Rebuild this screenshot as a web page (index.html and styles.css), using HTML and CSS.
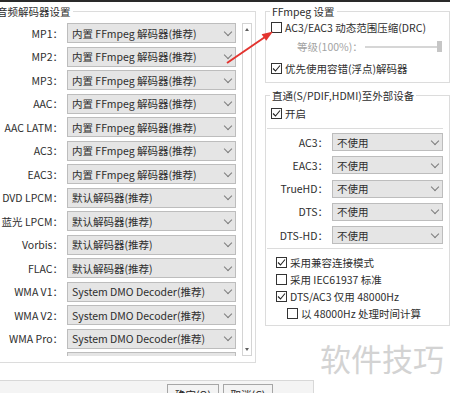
FILE: index.html
```html
<!DOCTYPE html>
<html lang="zh-CN">
  <head>
    <meta charset="UTF-8" />
    <meta name="viewport" content="width=device-width, initial-scale=1.0" />
    <title>音频解码器设置</title>
    <link rel="stylesheet" href="styles.css">
  </head>

  <body>
    <div class="topbar"></div>

    <div class="main">
      <!-- Decoder list -->
      <fieldset class="group group-decoders">
        <legend>音频解码器设置</legend>
        <div class="decoder-area">
          <div class="decoder-list">
            <div class="row"><label>MP1：</label><div class="select">内置 FFmpeg 解码器(推荐)</div></div>
            <div class="row"><label>MP2：</label><div class="select">内置 FFmpeg 解码器(推荐)</div></div>
            <div class="row"><label>MP3：</label><div class="select">内置 FFmpeg 解码器(推荐)</div></div>
            <div class="row"><label>AAC：</label><div class="select">内置 FFmpeg 解码器(推荐)</div></div>
            <div class="row"><label>AAC LATM：</label><div class="select">内置 FFmpeg 解码器(推荐)</div></div>
            <div class="row"><label>AC3：</label><div class="select">内置 FFmpeg 解码器(推荐)</div></div>
            <div class="row"><label>EAC3：</label><div class="select">内置 FFmpeg 解码器(推荐)</div></div>
            <div class="row"><label>DVD LPCM：</label><div class="select">默认解码器(推荐)</div></div>
            <div class="row"><label>蓝光 LPCM：</label><div class="select">默认解码器(推荐)</div></div>
            <div class="row"><label>Vorbis：</label><div class="select">默认解码器(推荐)</div></div>
            <div class="row"><label>FLAC：</label><div class="select">默认解码器(推荐)</div></div>
            <div class="row"><label>WMA V1：</label><div class="select">System DMO Decoder(推荐)</div></div>
            <div class="row"><label>WMA V2：</label><div class="select">System DMO Decoder(推荐)</div></div>
            <div class="row"><label>WMA Pro：</label><div class="select">System DMO Decoder(推荐)</div></div>
            <div class="row row-cut"><label></label><div class="select"></div></div>
          </div>
          <div class="scrollbar">
            <span class="arrow-up"></span>
            <span class="arrow-down"></span>
          </div>
        </div>
      </fieldset>

      <div class="side">
        <!-- FFmpeg options -->
        <fieldset class="group group-ffmpeg">
          <legend>FFmpeg 设置</legend>
          <div class="check-row drc"><span class="box"></span>AC3/EAC3 动态范围压缩(DRC)</div>
          <div class="level-row">
            等级(100%)：
            <div class="slider"><span class="thumb"></span></div>
          </div>
          <div class="check-row float-row">
            <span class="box checked"><svg viewBox="0 0 9 9"><polyline points="1,4.5 3.5,7 8,1.5" /></svg></span>优先使用容错(浮点)解码器
          </div>
        </fieldset>

        <!-- Passthrough -->
        <fieldset class="group group-pass">
          <legend>直通(S/PDIF,HDMI)至外部设备</legend>
          <div class="check-row enable-row">
            <span class="box checked"><svg viewBox="0 0 9 9"><polyline points="1,4.5 3.5,7 8,1.5" /></svg></span>开启
          </div>
          <div class="rule"></div>
          <div class="pass-list">
            <div class="row"><label>AC3：</label><div class="select">不使用</div></div>
            <div class="row"><label>EAC3：</label><div class="select">不使用</div></div>
            <div class="row"><label>TrueHD：</label><div class="select">不使用</div></div>
            <div class="row"><label>DTS：</label><div class="select">不使用</div></div>
            <div class="row"><label>DTS-HD：</label><div class="select">不使用</div></div>
          </div>
          <div class="rule rule-low"></div>
          <div class="options">
            <div class="check-row opt">
              <span class="box checked"><svg viewBox="0 0 9 9"><polyline points="1,4.5 3.5,7 8,1.5" /></svg></span>采用兼容连接模式
            </div>
            <div class="check-row opt"><span class="box"></span>采用 IEC61937 标准</div>
            <div class="check-row opt">
              <span class="box checked"><svg viewBox="0 0 9 9"><polyline points="1,4.5 3.5,7 8,1.5" /></svg></span>DTS/AC3 仅用 48000Hz
            </div>
            <div class="check-row opt indent"><span class="box"></span>以 48000Hz 处理时间计算</div>
          </div>
        </fieldset>
      </div>
    </div>

    <div class="footer">
      <button class="btn-ok">确定(O)</button>
      <button class="btn-cancel">取消(C)</button>
    </div>

    <div class="watermark">软件技巧</div>

    <!-- red pointer drawn over the dialog -->
    <svg class="pointer" width="450" height="393" viewBox="0 0 450 393">
      <line x1="227" y1="63" x2="265" y2="37" />
      <polygon points="273,31.5 266.2,40.8 261.6,34.3" />
    </svg>
  </body>
</html>
```

FILE: styles.css
```css
/* Global Styles */
* {
  box-sizing: border-box;
}

html,
body {
  margin: 0;
  padding: 0;
}

body {
  position: relative;
  width: 450px;
  height: 393px;
  overflow: hidden;
  background: #fff;
  font-family: "Noto Sans CJK SC", sans-serif;
  font-size: 10.5px;
  color: #2e2e2e;
}

.topbar {
  height: 2px;
  background: #2a2a2a;
}

.main {
  display: flex;
  align-items: flex-start;
}

/* Group boxes */
.group {
  margin: 1px 0 0;
  border: 1px solid #dcdcdc;
  min-width: 0;
}

legend {
  padding: 0 2px;
  height: 17px;
  line-height: 17px;
  white-space: nowrap;
}

.row {
  display: flex;
  align-items: center;
  gap: 4px;
  flex: none;
}

.row label {
  text-align: right;
  white-space: nowrap;
}

.select {
  display: flex;
  align-items: center;
  padding: 0 4px;
  background: #e5e5e5;
  border: 1px solid #bdbdbd;
  white-space: nowrap;
}

.select::after {
  content: "";
  margin-left: auto;
  margin-top: -3px;
  width: 5px;
  height: 5px;
  border-right: 1px solid #7c7c7c;
  border-bottom: 1px solid #7c7c7c;
  transform: rotate(45deg);
}

/* Left: decoder list */
.group-decoders {
  margin-left: -6px;
  width: 262px;
  padding: 3px 3px 6px 0;
}

.decoder-area {
  display: flex;
  gap: 6px;
  height: 333px;
}

.decoder-list {
  width: 241px;
  overflow: hidden;
  display: flex;
  flex-direction: column;
  gap: 3.5px;
}

.decoder-list label {
  width: 68px;
}

.decoder-list .select {
  width: 169px;
  height: 20px;
  flex: none;
}

.scrollbar {
  width: 10px;
  border: 1px solid #d4d4d4;
  display: flex;
  flex-direction: column;
  justify-content: space-between;
  align-items: center;
  padding: 4px 0 4px;
}

.arrow-up,
.arrow-down {
  border-left: 2.5px solid transparent;
  border-right: 2.5px solid transparent;
}

.arrow-up {
  border-bottom: 3px solid #606060;
}

.arrow-down {
  border-top: 3px solid #606060;
}

/* Right column */
.side {
  margin-left: 9px;
  width: 185px;
}

.check-row {
  display: flex;
  align-items: center;
  gap: 3px;
  height: 15px;
  white-space: nowrap;
}

.box {
  flex: none;
  display: flex;
  align-items: center;
  justify-content: center;
  width: 11px;
  height: 11px;
  margin-left: 1px;
  border: 1px solid #333;
  background: #fff;
}

.box svg {
  width: 9px;
  height: 9px;
  fill: none;
  stroke: #222;
  stroke-width: 1.1;
}

.group-ffmpeg {
  padding: 0 5px 6px 4px;
}

.level-row {
  display: flex;
  align-items: center;
  height: 15px;
  margin-top: 4px;
  padding-left: 27px;
  color: #a3a3a3;
  white-space: nowrap;
}

.slider {
  display: flex;
  align-items: center;
  justify-content: flex-end;
  width: 77px;
  height: 12px;
  margin-left: auto;
  margin-right: 2px;
  background: linear-gradient(#d6d6d6, #d6d6d6) center / 100% 2px no-repeat;
}

.thumb {
  width: 5px;
  height: 11px;
  background: #c6c6c6;
}

.float-row {
  margin-top: 7px;
}

.group-pass {
  margin-top: 4px;
  padding: 0 5px 3px 4px;
}

.enable-row {
  margin-top: 1px;
  height: 16px;
}

.rule {
  width: 176px;
  height: 1px;
  margin: 7px 0 0 -3px;
  background: #dcdcdc;
}

.rule-low {
  margin-top: 4px;
}

.pass-list {
  margin-top: 4px;
  display: flex;
  flex-direction: column;
  gap: 5.25px;
}

.pass-list label {
  width: 58px;
}

.pass-list .select {
  width: 111px;
  height: 18px;
}

.options {
  margin-top: 5px;
  padding-left: 5px;
}

.opt {
  height: 17px;
}

.indent {
  padding-left: 11px;
}

/* Bottom buttons */
.footer {
  display: flex;
  gap: 4px;
  width: 314px;
  height: 20px;
  margin-top: 17px;
  padding: 3px 0 0 167px;
  background: #f4f4f4;
  border-top: 1px solid #d8d8d8;
  border-right: 1px solid #d8d8d8;
}

.footer button {
  flex: none;
  height: 22px;
  padding: 0 0 0;
  font: inherit;
  line-height: 16px;
  color: #222;
  background: #f3f3f3;
  border: 1px solid #a6a6a6;
}

.btn-ok {
  width: 52px;
}

.btn-cancel {
  width: 50px;
}

/* Overlays */
.watermark {
  position: absolute;
  left: 320px;
  top: 338px;
  font-size: 31px;
  line-height: 40px;
  color: #d3d3d3;
  white-space: nowrap;
}

.pointer {
  position: absolute;
  left: 0;
  top: 0;
  pointer-events: none;
}

.pointer line {
  stroke: #e3342f;
  stroke-width: 2;
}

.pointer polygon {
  fill: #e3342f;
}
```
